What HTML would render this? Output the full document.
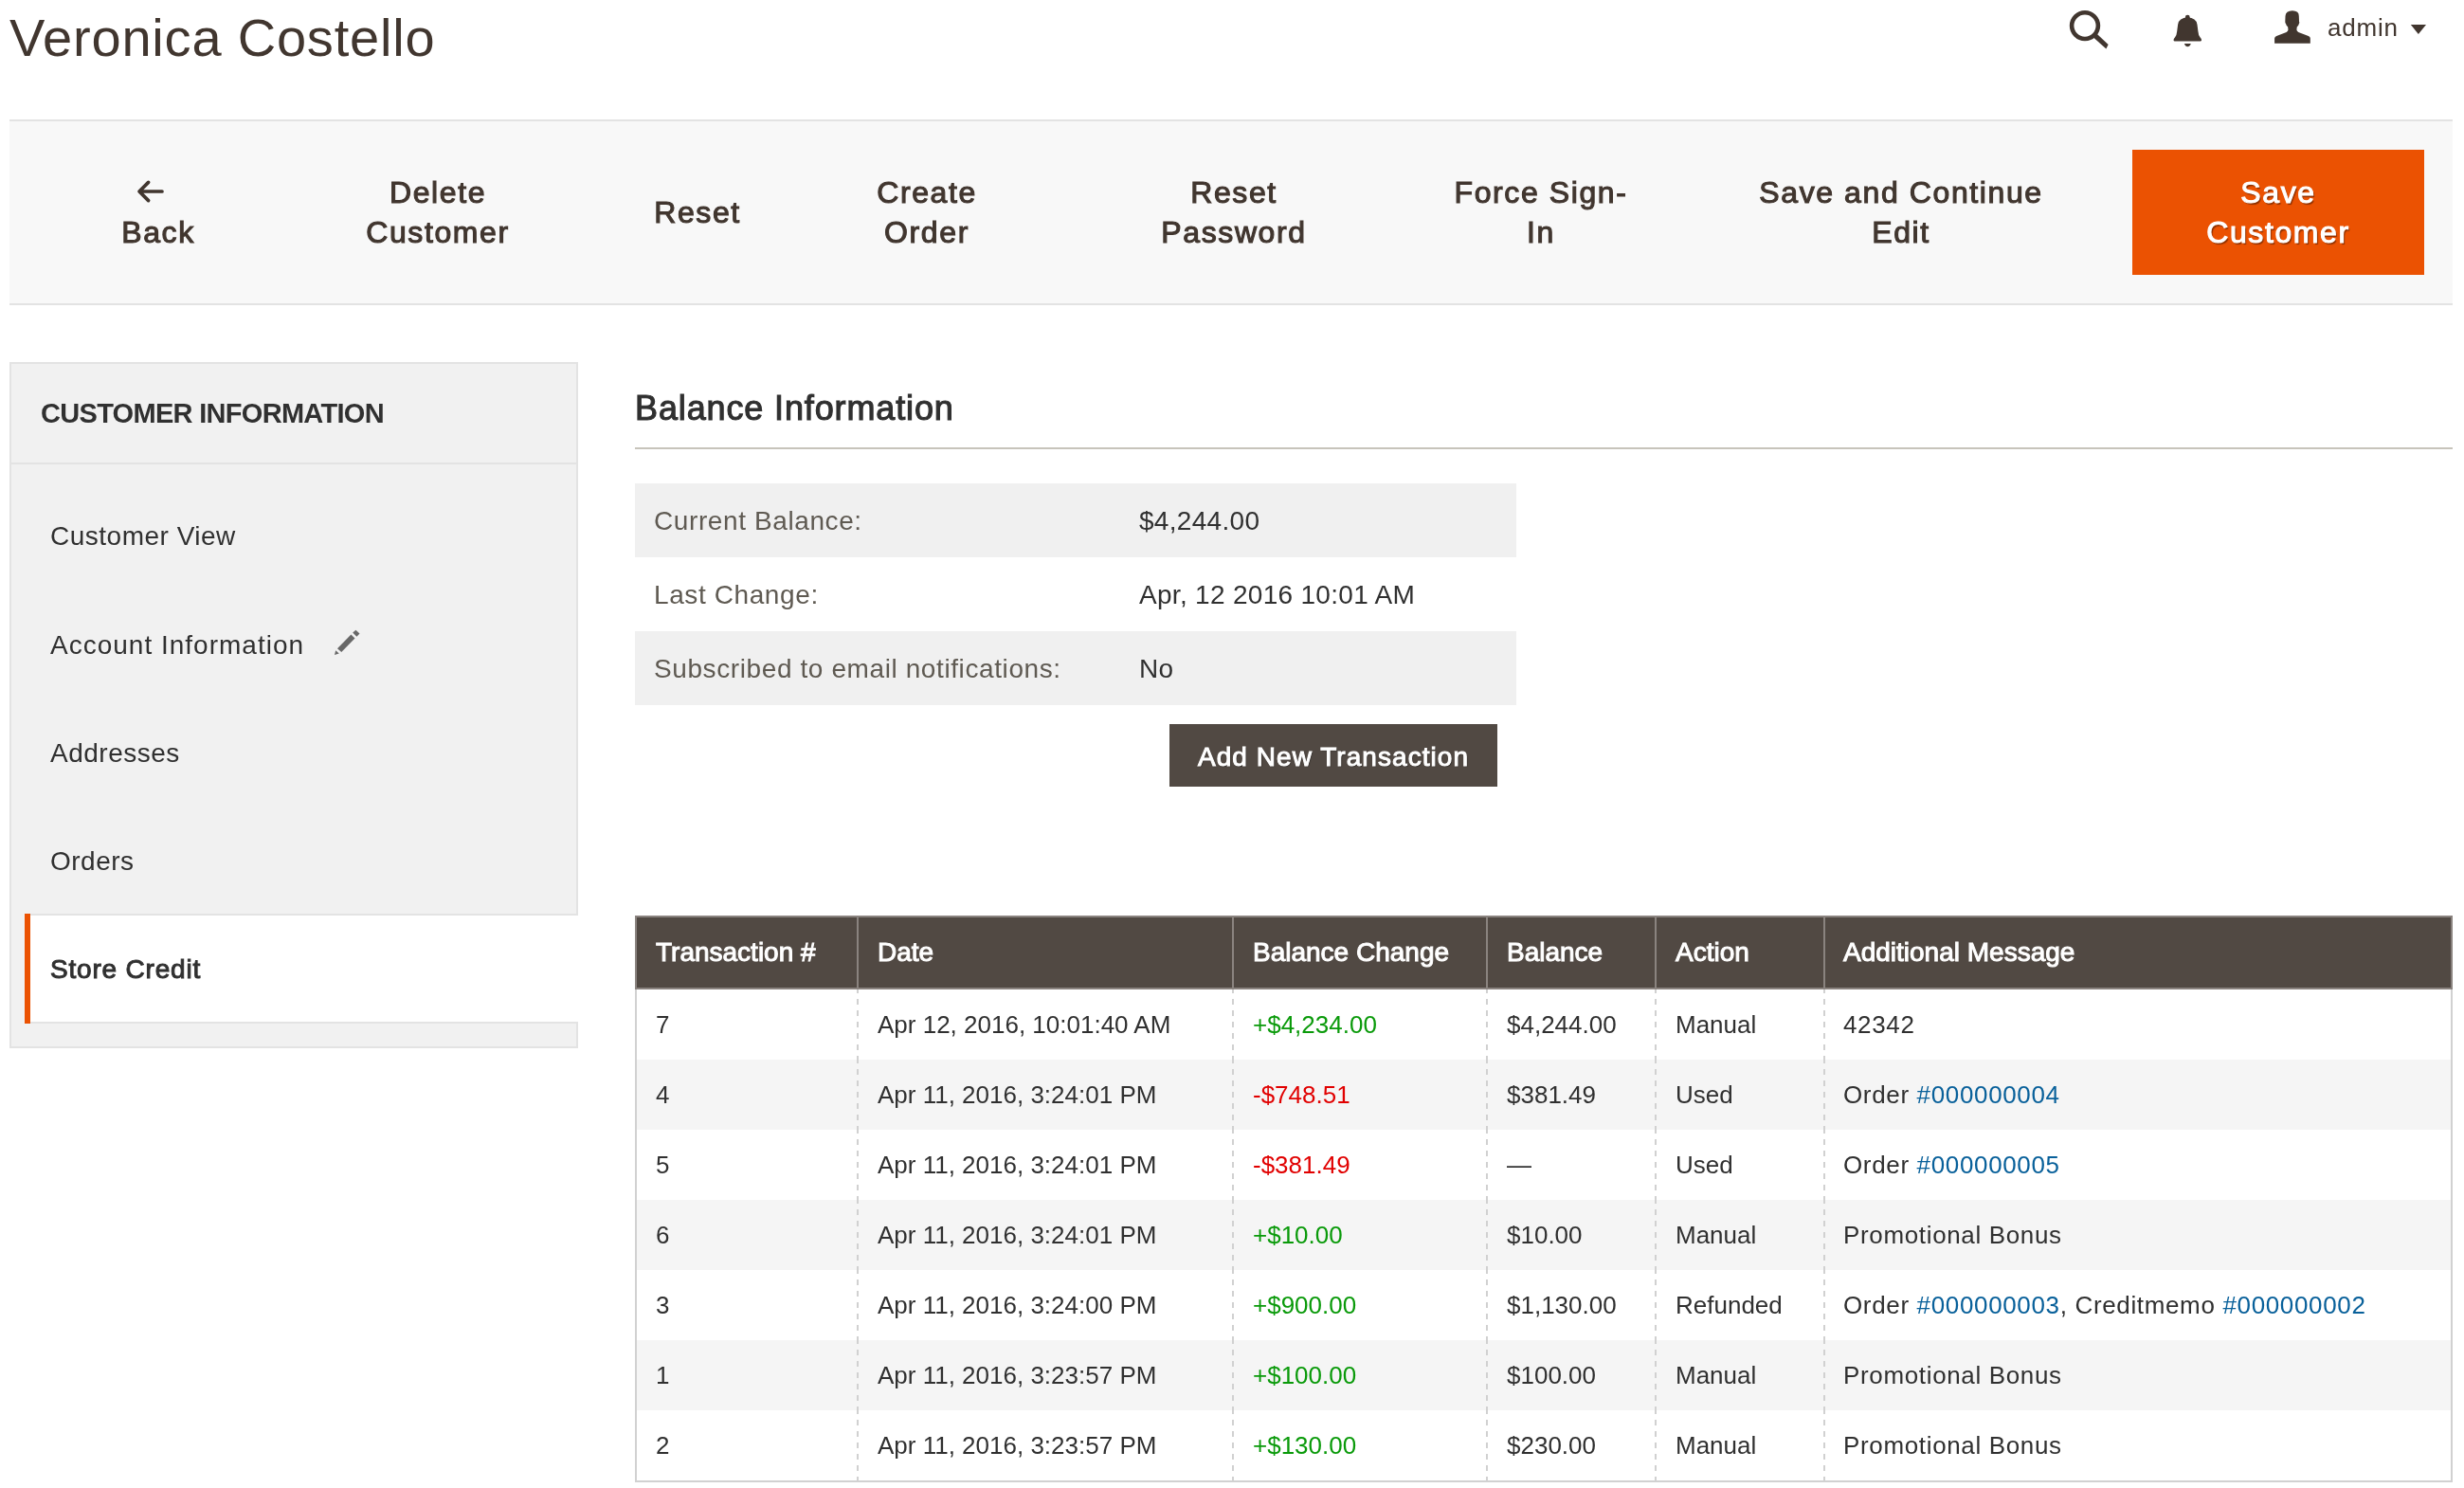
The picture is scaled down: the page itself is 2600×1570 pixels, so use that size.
<!DOCTYPE html>
<html><head><meta charset="utf-8">
<style>
*{margin:0;padding:0;box-sizing:border-box}
html,body{width:2600px;height:1570px;overflow:hidden;background:#fff}
body{font-family:"Liberation Sans",sans-serif;color:#303030;position:relative}
.a{position:absolute;white-space:nowrap;will-change:transform}
.btn{will-change:transform}
.title{left:10px;top:2px;font-size:56px;line-height:76px;color:#41362f;letter-spacing:0.8px}
.admin{left:2456px;top:10.5px;font-size:26px;line-height:36px;color:#41362f;letter-spacing:0.8px}
.toolbar{left:10px;top:126px;width:2578px;height:196px;background:#f8f8f8;border-top:2px solid #e3e3e3;border-bottom:2px solid #e3e3e3}
.btn{position:absolute;text-align:center;font-weight:normal;-webkit-text-stroke:1.1px currentColor;font-size:32px;line-height:41.5px;color:#41362f;white-space:nowrap;letter-spacing:1.6px}
.save{left:2250px;top:158px;width:308px;height:132px;background:#eb5202;color:#fff;text-shadow:1px 1px 1px #5a2a0a}
.nav{left:10px;top:382px;width:600px;height:724px;background:#f1f1f1;border:2px solid #e3e3e3}
.navsep{left:12px;top:488px;width:596px;height:2px;background:#e3e3e3}
.navt{font-size:28px;line-height:36px;color:#303030;letter-spacing:0.5px}
.active{left:26px;top:964px;width:584px;height:116px;background:#fff;border-top:2px solid #e3e3e3;border-bottom:2px solid #e3e3e3}
.bar{left:26px;top:964px;width:6px;height:116px;background:#eb5202}
.legend{left:670px;font-size:36px;line-height:44px;font-weight:normal;-webkit-text-stroke:1.1px currentColor;color:#303030;letter-spacing:0.87px}
.legline{left:670px;top:472px;width:1918px;height:2px;background:#c7c4bb}
.irow{left:670px;width:930px;height:78px}
.g{background:#f0f0f0}
.lab{font-size:28px;line-height:36px;color:#5f5a52;letter-spacing:0.6px}
.val{font-size:28px;line-height:36px;color:#303030;letter-spacing:0.3px}
.addbtn{left:1234px;top:764px;width:346px;height:66px;background:#514943;color:#fff;font-weight:normal;-webkit-text-stroke:1px currentColor;font-size:28px;line-height:69px;letter-spacing:1.05px;text-align:center;text-shadow:1px 1px 1px rgba(0,0,0,0.45)}
table{position:absolute;left:670px;top:966px;width:1918px;border-collapse:collapse;font-size:26px;color:#303030}
.g2{left:672px;width:1914px;height:74px;background:#f5f5f5}
.vh{top:968px;width:2px;height:74px;background:#8a837f}
.vd{top:1044px;width:2px;height:518px;background:linear-gradient(to bottom,#d1d1d1 0px 4px,transparent 4px 10px,#d1d1d1 10px 16px,transparent 16px 22px,#d1d1d1 22px 28px,transparent 28px 34px,#d1d1d1 34px 40px,transparent 40px 46px,#d1d1d1 46px 52px,transparent 52px 58px,#d1d1d1 58px 64px,transparent 64px 70px,#d1d1d1 70px 74px);background-size:2px 74px;background-repeat:repeat-y}
.th{top:968px;font-size:28px;line-height:74px;font-weight:normal;-webkit-text-stroke:1px currentColor;color:#fff;letter-spacing:0px}
.td{font-size:26px;line-height:74px;color:#303030}
.pos{color:#0a9a0a}.neg{color:#e10000}
.lk{color:#08609a}
.msg{letter-spacing:0.65px}
</style></head><body>
<div class="a title">Veronica Costello</div>
<svg class="a" style="left:2390px;top:0" width="60" height="60"><path fill="#41362f" d="M10.1,45.8 L10.1,40.6 Q10.3,38.8 12.2,38 L22.6,33.9 Q24.4,33 24.5,31.2 L24.1,28.3 Q22.5,27.2 22.1,25.2 Q21.1,24.3 21.3,22.5 L21.5,17 Q21.8,11.3 28.9,11.2 Q36,11.3 35.8,17 L36,22.5 Q36.8,24.3 35.8,25.2 Q35.4,27.2 33.8,28.3 L33.4,31.2 Q33.5,33 35.3,33.9 L45.8,38 Q47.8,38.8 47.8,40.6 L47.8,45.8 Z"/></svg>
<div class="a admin">admin</div>

<div class="a toolbar"></div>
<div class="btn" style="left:67px;top:183px;width:200px">&nbsp;<br>Back</div>
<svg class="a" style="left:0;top:0" width="200" height="230"><path d="M156.6,192.4 L147,202 L156.6,211.6 M147.5,202 L171,202" fill="none" stroke="#41362f" stroke-width="3.7" stroke-linecap="round" stroke-linejoin="round"/></svg>
<div class="btn" style="left:362px;top:183px;width:200px">Delete<br>Customer</div>
<div class="btn" style="left:636px;top:204px;width:200px">Reset</div>
<div class="btn" style="left:878px;top:183px;width:200px">Create<br>Order</div>
<div class="btn" style="left:1202px;top:183px;width:200px">Reset<br>Password</div>
<div class="btn" style="left:1526px;top:183px;width:200px">Force Sign-<br>In</div>
<div class="btn" style="left:1856px;top:183px;width:300px">Save and Continue<br>Edit</div>
<div class="a save"></div>
<div class="btn" style="left:2254px;top:183px;width:300px;color:#fff;text-shadow:1.5px 1.5px 1px rgba(60,20,0,0.55)">Save<br>Customer</div>

<div class="a nav"></div>
<div class="a navsep"></div>
<div class="a navt" style="left:43px;top:418px;font-weight:bold;font-size:29px;letter-spacing:-0.7px">CUSTOMER INFORMATION</div>
<div class="a navt" style="left:53px;top:548px">Customer View</div>
<div class="a navt" style="left:53px;top:663px;letter-spacing:1px">Account Information</div>
<svg class="a" style="left:340px;top:655px" width="50" height="45"><g fill="#686868"><path d="M13,36 L14.2,31.2 L17.8,34.5 Z"/><path d="M16,29.2 L30.4,14.5 L34.5,18.5 L20.3,33 Z"/><path d="M32.2,12.4 L35.4,9.7 L39.5,13.6 L36.4,16.8 Z"/></g></svg>
<div class="a navt" style="left:53px;top:777px">Addresses</div>
<div class="a navt" style="left:53px;top:891px">Orders</div>
<div class="a active"></div>
<div class="a bar"></div>
<div class="a navt" style="left:53px;top:1005px;font-weight:normal;-webkit-text-stroke:1px currentColor;letter-spacing:0.8px">Store Credit</div>

<div class="a legend" style="top:409px">Balance Information</div>
<div class="a legline"></div>
<div class="a irow g" style="top:510px"></div>
<div class="a irow" style="top:588px"></div>
<div class="a irow g" style="top:666px"></div>
<div class="a lab" style="left:690px;top:532px">Current Balance:</div>
<div class="a val" style="left:1202px;top:532px">$4,244.00</div>
<div class="a lab" style="left:690px;top:610px">Last Change:</div>
<div class="a val" style="left:1202px;top:610px">Apr, 12 2016 10:01 AM</div>
<div class="a lab" style="left:690px;top:688px">Subscribed to email notifications:</div>
<div class="a val" style="left:1202px;top:688px">No</div>
<div class="a addbtn">Add New Transaction</div>

<svg class="a" style="left:2170px;top:0" width="430" height="60" viewBox="0 0 430 60">
<g fill="#41362f" stroke="none">
<circle cx="30" cy="27.1" r="13.9" fill="none" stroke="#41362f" stroke-width="4.6"/>
<path d="M37.8,38.6 L41.6,34.8 L54.6,47.0 L52.4,51.4 Z"/>
<circle cx="138.3" cy="18.2" r="2.4"/>
<path d="M124.6,43.5 L152,43.5 Q153.4,43.5 153,41.8 Q152.6,40.6 151.6,39.6 Q149.8,37.5 149.4,33 L148.5,26 Q147.5,18.8 138.3,18.6 Q129.1,18.8 128.1,26 L127.2,33 Q126.8,37.5 125,39.6 Q124,40.6 123.6,41.8 Q123.2,43.5 124.6,43.5 Z"/>
<path d="M134.9,45.9 L141.8,45.9 Q140.6,49.2 138.3,49.2 Q136.1,49.2 134.9,45.9 Z"/>

<path d="M373.8,26 L390,26 L381.9,35.9 Z"/>
</g></svg>

<div class="a" style="left:670px;top:966px;width:1918px;height:78px;background:#514943;border:2px solid #8a837f"></div>
<div class="a" style="left:670px;top:1044px;width:1918px;height:520px;border:2px solid #d1d1d1;border-top:0"></div>
<div class="a g2" style="top:1118px"></div>
<div class="a g2" style="top:1266px"></div>
<div class="a g2" style="top:1414px"></div>
<div class="a vh" style="left:904px"></div><div class="a vd" style="left:904px"></div>
<div class="a vh" style="left:1300px"></div><div class="a vd" style="left:1300px"></div>
<div class="a vh" style="left:1568px"></div><div class="a vd" style="left:1568px"></div>
<div class="a vh" style="left:1746px"></div><div class="a vd" style="left:1746px"></div>
<div class="a vh" style="left:1924px"></div><div class="a vd" style="left:1924px"></div>
<div class="a th" style="left:692px">Transaction #</div>
<div class="a th" style="left:926px">Date</div>
<div class="a th" style="left:1322px">Balance Change</div>
<div class="a th" style="left:1590px">Balance</div>
<div class="a th" style="left:1768px">Action</div>
<div class="a th" style="left:1945px">Additional Message</div>
<div class="a td" style="left:692px;top:1044px">7</div>
<div class="a td" style="left:926px;top:1044px">Apr 12, 2016, 10:01:40 AM</div>
<div class="a td pos" style="left:1322px;top:1044px">+$4,234.00</div>
<div class="a td" style="left:1590px;top:1044px">$4,244.00</div>
<div class="a td" style="left:1768px;top:1044px">Manual</div>
<div class="a td msg" style="left:1945px;top:1044px">42342</div>
<div class="a td" style="left:692px;top:1118px">4</div>
<div class="a td" style="left:926px;top:1118px">Apr 11, 2016, 3:24:01 PM</div>
<div class="a td neg" style="left:1322px;top:1118px">-$748.51</div>
<div class="a td" style="left:1590px;top:1118px">$381.49</div>
<div class="a td" style="left:1768px;top:1118px">Used</div>
<div class="a td msg" style="left:1945px;top:1118px">Order <span class="lk">#000000004</span></div>
<div class="a td" style="left:692px;top:1192px">5</div>
<div class="a td" style="left:926px;top:1192px">Apr 11, 2016, 3:24:01 PM</div>
<div class="a td neg" style="left:1322px;top:1192px">-$381.49</div>
<div class="a td" style="left:1590px;top:1192px">&mdash;</div>
<div class="a td" style="left:1768px;top:1192px">Used</div>
<div class="a td msg" style="left:1945px;top:1192px">Order <span class="lk">#000000005</span></div>
<div class="a td" style="left:692px;top:1266px">6</div>
<div class="a td" style="left:926px;top:1266px">Apr 11, 2016, 3:24:01 PM</div>
<div class="a td pos" style="left:1322px;top:1266px">+$10.00</div>
<div class="a td" style="left:1590px;top:1266px">$10.00</div>
<div class="a td" style="left:1768px;top:1266px">Manual</div>
<div class="a td msg" style="left:1945px;top:1266px">Promotional Bonus</div>
<div class="a td" style="left:692px;top:1340px">3</div>
<div class="a td" style="left:926px;top:1340px">Apr 11, 2016, 3:24:00 PM</div>
<div class="a td pos" style="left:1322px;top:1340px">+$900.00</div>
<div class="a td" style="left:1590px;top:1340px">$1,130.00</div>
<div class="a td" style="left:1768px;top:1340px">Refunded</div>
<div class="a td msg" style="left:1945px;top:1340px">Order <span class="lk">#000000003</span>, Creditmemo <span class="lk">#000000002</span></div>
<div class="a td" style="left:692px;top:1414px">1</div>
<div class="a td" style="left:926px;top:1414px">Apr 11, 2016, 3:23:57 PM</div>
<div class="a td pos" style="left:1322px;top:1414px">+$100.00</div>
<div class="a td" style="left:1590px;top:1414px">$100.00</div>
<div class="a td" style="left:1768px;top:1414px">Manual</div>
<div class="a td msg" style="left:1945px;top:1414px">Promotional Bonus</div>
<div class="a td" style="left:692px;top:1488px">2</div>
<div class="a td" style="left:926px;top:1488px">Apr 11, 2016, 3:23:57 PM</div>
<div class="a td pos" style="left:1322px;top:1488px">+$130.00</div>
<div class="a td" style="left:1590px;top:1488px">$230.00</div>
<div class="a td" style="left:1768px;top:1488px">Manual</div>
<div class="a td msg" style="left:1945px;top:1488px">Promotional Bonus</div>
</body></html>
